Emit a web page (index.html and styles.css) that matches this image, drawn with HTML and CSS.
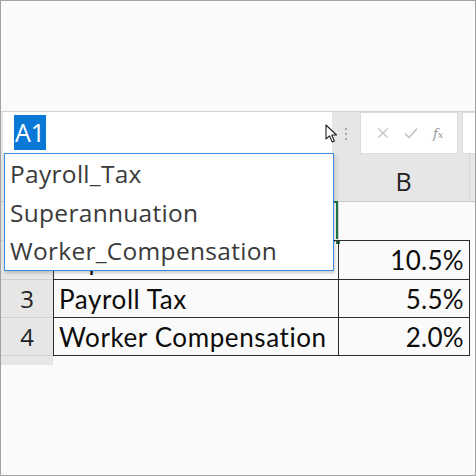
FILE: index.html
```html
<!DOCTYPE html>
<html lang="en">
<head>
	<meta charset="UTF-8" />
	<meta name="viewport" content="width=device-width,initial-scale=1" />
	<title>Named ranges</title>
	<link rel="stylesheet" href="styles.css">
</head>
<body>
	<div class="frame">
		<div class="top-space"></div>

		<div class="formula-bar">
			<div class="name-box">
				<span class="name-sel">A1</span>
				<svg class="pointer" width="14" height="20" viewBox="0 0 14 20">
					<path d="M1 1 L1 15 L4.5 11.8 L7.2 18 L9.4 17 L6.8 11 L11.5 11 Z" fill="#fff" stroke="#222" stroke-width="1.1" stroke-linejoin="round" />
				</svg>
			</div>
			<div class="grip"><i></i><i></i><i></i></div>
			<div class="fx-box">
				<svg width="12" height="12" viewBox="0 0 12 12"><path d="M1.5 1.5 L10.5 10.5 M10.5 1.5 L1.5 10.5" stroke="#c4c4c4" stroke-width="1.4" /></svg>
				<svg width="14" height="12" viewBox="0 0 14 12"><path d="M1 6.5 L5 10.5 L13 1.5" stroke="#c4c4c4" stroke-width="1.6" fill="none" /></svg>
				<span class="fx">f<small>x</small></span>
			</div>
			<div class="formula-input"></div>
		</div>

		<div class="sheet">
			<div class="corner"></div>
			<div class="col-head"></div>
			<div class="col-head">B</div>
			<div class="col-head rest"></div>

			<div class="row-head"></div>
			<div class="cell a1"><span class="handle"></span></div>
			<div class="cell"></div>
			<div class="gap"></div>

			<div class="row-head"></div>
			<div class="cell boxed top">Superannuation</div>
			<div class="cell boxed top num">10.5%</div>
			<div class="gap"></div>

			<div class="row-head">3</div>
			<div class="cell boxed">Payroll Tax</div>
			<div class="cell boxed num">5.5%</div>
			<div class="gap"></div>

			<div class="row-head">4</div>
			<div class="cell boxed">Worker Compensation</div>
			<div class="cell boxed num">2.0%</div>
			<div class="gap"></div>

			<div class="row-head tail"></div>
		</div>

		<ul class="name-list">
			<li>Payroll_Tax</li>
			<li>Superannuation</li>
			<li>Worker_Compensation</li>
		</ul>
	</div>
</body>
</html>
```

FILE: styles.css
```css
* {
	box-sizing: border-box;
	margin: 0;
	padding: 0;
}

body {
	background: #fafafa;
}

.frame {
	position: relative;
	width: 476px;
	height: 476px;
	border: 1px solid #a2a2a2;
	background: #fafafa;
	overflow: hidden;
	font-family: 'Open Sans', sans-serif;
}

.top-space {
	height: 110px;
}

/* formula bar */
.formula-bar {
	display: flex;
	height: 43px;
	background: #e6e6e6;
	border-top: 1px solid #d2d2d2;
}

.name-box {
	position: relative;
	width: 329px;
	margin-left: 2px;
	height: 41px;
	background: #fff;
	padding: 3px 0 0 11px;
}

.name-sel {
	display: inline-block;
	height: 35px;
	padding: 0 1px;
	background: #0a78d7;
	color: #fff;
	font-size: 25px;
	line-height: 35px;
}

.pointer {
	position: absolute;
	left: 322px;
	top: 12px;
}

.grip {
	width: 28px;
	display: flex;
	flex-direction: column;
	align-items: center;
	justify-content: center;
	gap: 3px;
	padding-top: 2px;
}

.grip i {
	width: 2px;
	height: 2px;
	background: #a8a8a8;
}

.fx-box {
	width: 98px;
	background: #fff;
	border: 1px solid #dcdcdc;
	display: flex;
	align-items: center;
	justify-content: space-around;
	padding: 0 6px 0 8px;
}

.fx {
	font-family: 'DejaVu Serif', serif;
	font-style: italic;
	font-size: 13px;
	color: #9a9a9a;
}

.fx small {
	font-size: 10px;
}

.formula-input {
	flex: 1;
	margin-left: 4px;
	background: #fff;
	border: 1px solid #dcdcdc;
	border-right: none;
}

/* sheet grid */
.sheet {
	display: grid;
	grid-template-columns: 52px 285px 132px 1fr;
	grid-template-rows: 48px 39px 39px 38px 38px 9px;
	font-family: 'Lato', sans-serif;
}

.corner,
.col-head {
	background: #e6e6e6;
	border-bottom: 1px solid #c8c8c8;
	border-right: 1px solid #d6d6d6;
}

.col-head {
	display: flex;
	align-items: center;
	justify-content: center;
	font-family: 'Open Sans', sans-serif;
	font-size: 25px;
	color: #222;
	padding-top: 7px;
}

.col-head.rest {
	border-right: none;
}

.row-head {
	background: #e6e6e6;
	border-bottom: 1px solid #d0d0d0;
	display: flex;
	align-items: center;
	justify-content: center;
	font-family: 'Open Sans', sans-serif;
	font-size: 24px;
	color: #222;
}

.row-head.tail {
	border-bottom: none;
}

.cell {
	position: relative;
	display: flex;
	align-items: center;
	padding: 0 5px 0 5px;
	font-size: 26px;
	letter-spacing: 0.6px;
	color: #0c0c0c;
	border-left: 1px solid #d4d4d4;
}

.cell.boxed {
	border-left: 1px solid #2c2c2c;
	border-bottom: 1px solid #2c2c2c;
}

.cell.boxed.num {
	border-right: 1px solid #2c2c2c;
	letter-spacing: 0.3px;
}

.cell.boxed.top {
	border-top: 1px solid #2c2c2c;
	margin-top: -1px;
}

.num {
	justify-content: flex-end;
}

.a1 {
	border: 2px solid #217346;
	margin: -1px 0 -1px -1px;
}

.handle {
	position: absolute;
	right: -5px;
	bottom: -5px;
	width: 6px;
	height: 6px;
	background: #217346;
	border: 1px solid #fff;
}

/* name box drop-down */
.name-list {
	position: absolute;
	left: 3px;
	top: 152px;
	width: 330px;
	height: 118px;
	list-style: none;
	background: #fff;
	border: 1px solid #3a8ee0;
	box-shadow: 1px 2px 3px rgba(0, 0, 0, 0.18);
	padding: 0 0 0 5px;
	z-index: 2;
}

.name-list li {
	height: 38.6px;
	line-height: 40px;
	font-size: 24.5px;
	letter-spacing: 0.3px;
	color: #3a3a3a;
}
```
